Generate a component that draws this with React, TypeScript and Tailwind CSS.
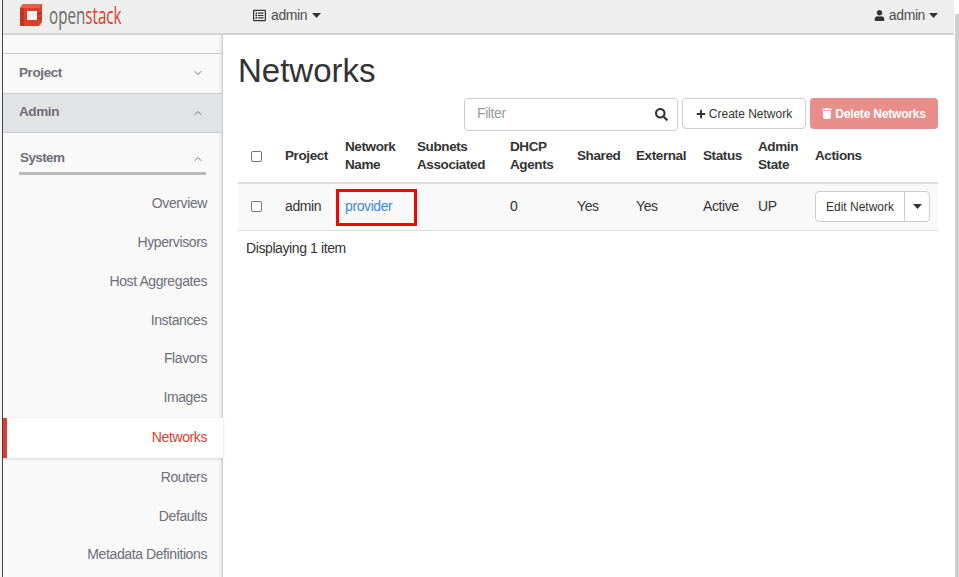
import { ChevronDown, ChevronUp } from 'lucide-react'
import { FaPlus, FaSearch, FaTrash, FaUser, FaRegListAlt } from 'react-icons/fa'

const panelItems = [
  { label: 'Overview', h: 'h-[39px]' },
  { label: 'Hypervisors', h: 'h-[39px]' },
  { label: 'Host Aggregates', h: 'h-[39px]' },
  { label: 'Instances', h: 'h-[39px]' },
  { label: 'Flavors', h: 'h-[37px]' },
  { label: 'Images', h: 'h-[41px]' },
]

const afterItems = [
  { label: 'Routers', h: 'h-[39px]' },
  { label: 'Defaults', h: 'h-[39px]' },
  { label: 'Metadata Definitions', h: 'h-[37px]' },
]

function Logo() {
  return (
    <svg width="24" height="24" viewBox="0 0 24 24">
      <path d="M1 5l3-4h19v18l-3 4H1z" fill="#d9402c" />
      <path d="M1 5h4v18H1z" fill="#c53523" />
      <path d="M1 5l3-4h19l-3 4z" fill="#e8604c" />
      <path d="M8 8h10v9H8z" fill="#f4f0ee" />
      <path d="M1 10h4v1H1zM1 17h4v1H1zM18 10h5v1h-5zM18 15h5v1h-5z" fill="#a82c1c" />
    </svg>
  )
}

function Caret() {
  return (
    <svg width="9" height="5" viewBox="0 0 9 5" className="fill-[#333]">
      <path d="M0 0h9L4.5 5z" />
    </svg>
  )
}

function Checkbox() {
  return <span className="block w-[11px] h-[11px] border border-[#767676] rounded-[2px] bg-white" />
}

export default function App() {
  return (
    <div className="w-[959px] h-[577px] overflow-hidden bg-white flex font-['Liberation_Sans',Arial,sans-serif] text-[14px] tracking-[-0.4px] text-[#333]">
      <div className="w-[3px] shrink-0 bg-[#f5f5f5] border-r border-[#444]" />
      <div className="flex-1 flex flex-col min-w-0">
        <header className="h-[35px] shrink-0 bg-[#eeeeee] border-b-2 border-[#d4d4d4] flex items-center text-[#4e4e4e]">
          <div className="w-[250px] pl-[16px] flex items-center gap-[6px] -mt-[3px]">
            <Logo />
            <span className="text-[23px] leading-none tracking-normal font-['Open_Sans',sans-serif] scale-x-[0.66] origin-left">
              <span className="text-[#6b6b6b]">open</span>
              <span className="text-[#d9402c]">stack</span>
            </span>
          </div>
          <div className="flex items-center gap-[5px] -mt-[3px]">
            <FaRegListAlt className="w-[13px] h-[13px] text-[#333]" />
            <span>admin</span>
            <Caret />
          </div>
          <div className="ml-auto mr-[16px] flex items-center gap-[4px] -mt-[3px]">
            <FaUser className="w-[11px] h-[11px] text-[#333]" />
            <span>admin</span>
            <Caret />
          </div>
        </header>
        <div className="flex-1 flex min-h-0">
          <nav className="w-[220px] shrink-0 bg-[#f9f9f9] border-r border-[#ccc] shadow-[inset_-3px_0_3px_-2px_rgba(0,0,0,0.12)] text-[#6e6e78]">
            <div className="h-[18px]" />
            <div className="h-[40px] border-t border-[#ccc] flex items-center justify-between pb-[1px] pl-[16px] pr-[18px] font-bold text-[13.5px]">
              <span>Project</span>
              <ChevronDown className="w-[12px] h-[12px]" />
            </div>
            <div className="h-[40px] border-y border-[#ccc] bg-[#e2e3e5] flex items-center justify-between pb-[1px] pl-[16px] pr-[18px] font-bold text-[13.5px]">
              <span>Admin</span>
              <ChevronUp className="w-[12px] h-[12px]" />
            </div>
            <div className="mx-[16px] h-[42px] border-b-[3px] border-[#bbb] flex items-center justify-between pt-[12px] pl-[1px] pr-[2px] font-bold text-[13.5px] tracking-[-0.6px]">
              <span>System</span>
              <ChevronUp className="w-[12px] h-[12px]" />
            </div>
            <div className="h-[9px]" />
            {panelItems.map((item) => (
              <div key={item.label} className={`${item.h} flex items-center justify-end pr-[15px]`}>
                {item.label}
              </div>
            ))}
            <div className="relative h-[40px] -mr-px bg-white flex items-center justify-end pb-[1px] pr-[16px] text-[#e03e2b] shadow-[0_1px_3px_rgba(0,0,0,0.15)] border-l-4 border-[#dd3c2b]">
              Networks
            </div>
            {afterItems.map((item) => (
              <div key={item.label} className={`${item.h} flex items-center justify-end pr-[15px]`}>
                {item.label}
              </div>
            ))}
          </nav>
          <main className="flex-1 min-w-0 pl-[15px] pr-[16px]">
            <h1 className="text-[33px] leading-[40px] tracking-normal font-normal mt-[16px] h-[47px]">Networks</h1>
            <div className="flex justify-end gap-[4px] h-[34px]">
              <div className="w-[214px] h-[33px] border border-[#ccc] rounded-[4px] flex items-center justify-between pl-[12px] pr-[9px] text-[#999]">
                <span className="pb-[2px]">Filter</span>
                <FaSearch className="w-[13px] h-[13px] text-[#333]" />
              </div>
              <button className="w-[124px] h-[31px] border border-[#ccc] rounded-[4px] text-[12px] tracking-normal flex items-center justify-center gap-[3px]">
                <FaPlus className="w-[10px] h-[10px]" />
                Create Network
              </button>
              <button className="w-[128px] h-[31px] rounded-[4px] bg-[#e88e8b] text-white font-bold text-[12px] tracking-[-0.2px] flex items-center justify-center gap-[3px]">
                <FaTrash className="w-[10px] h-[11px]" />
                Delete Networks
              </button>
            </div>
            <table className="w-[700px] border-collapse table-fixed">
              <thead>
                <tr className="h-[51px] border-b-[2px] border-[#ddd] text-left leading-[18px] text-[13.5px] [&>th]:pb-[3px]">
                  <th className="w-[47px] pl-[13px] pt-[1px]"><Checkbox /></th>
                  <th className="w-[60px]">Project</th>
                  <th className="w-[72px]">Network<br />Name</th>
                  <th className="w-[93px]">Subnets<br />Associated</th>
                  <th className="w-[67px]">DHCP<br />Agents</th>
                  <th className="w-[59px]">Shared</th>
                  <th className="w-[67px]">External</th>
                  <th className="w-[55px]">Status</th>
                  <th className="w-[57px]">Admin<br />State</th>
                  <th>Actions</th>
                </tr>
              </thead>
              <tbody>
                <tr className="h-[47px] bg-[#f9f9f9] border-b border-[#ddd]">
                  <td className="pl-[13px]"><Checkbox /></td>
                  <td>admin</td>
                  <td className="relative">
                    <span className="text-[#428bca]">provider</span>
                    <span className="absolute left-[-9px] top-[5px] w-[81px] h-[37px] border-[3px] border-[#ff0000]" />
                  </td>
                  <td></td>
                  <td>0</td>
                  <td>Yes</td>
                  <td>Yes</td>
                  <td>Active</td>
                  <td>UP</td>
                  <td>
                    <div className="flex w-[115px] h-[31px] border border-[#ccc] rounded-[4px] bg-white text-[12px] tracking-normal">
                      <span className="flex-1 flex items-center justify-center border-r border-[#ccc]">Edit Network</span>
                      <span className="w-[24px] flex items-center justify-center"><Caret /></span>
                    </div>
                  </td>
                </tr>
              </tbody>
            </table>
            <div className="mt-[7px] pl-[8px]">Displaying 1 item</div>
          </main>
        </div>
      </div>
      <div className="w-[5px] shrink-0 bg-white pl-[1px] pt-[14px]">
        <div className="h-full bg-[#cfcfcf]" />
      </div>
    </div>
  )
}
